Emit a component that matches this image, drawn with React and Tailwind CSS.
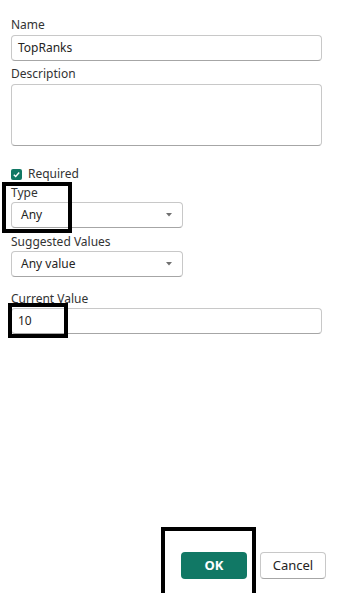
import React from 'react';

const font = { fontFamily: '"Noto Sans", "Open Sans", sans-serif' };

function Label({ children, className = '' }) {
  return (
    <div className={`text-[12px] leading-[16px] text-[#333333] ${className}`}>{children}</div>
  );
}

function Field({ value, className = '' }) {
  return (
    <div
      className={`h-[26px] rounded-[4px] border border-[#c8c8c8] border-b-[#a6a6a6] bg-white px-[6px] flex items-center text-[12px] text-[#252423] ${className}`}
    >
      {value}
    </div>
  );
}

function Select({ value }) {
  return (
    <div className="w-[172px] h-[26px] rounded-[4px] border border-[#c8c8c8] border-b-[#a6a6a6] bg-white pl-[9px] pr-[10px] flex items-center justify-between text-[12px] text-[#252423]">
      <span>{value}</span>
      <svg width="6" height="4" viewBox="0 0 6 4">
        <path d="M0 0H6L3 3.5Z" fill="#707070" />
      </svg>
    </div>
  );
}

function Marker({ className }) {
  return <div className={`absolute border-[4px] border-black pointer-events-none ${className}`} />;
}

export default function App() {
  return (
    <div className="relative w-[355px] h-[593px] bg-white overflow-hidden" style={font}>
      <div className="flex flex-col h-full pl-[11px] pr-[33px] pt-[17px]">
        <Label className="mb-[2px]">Name</Label>
        <Field value="TopRanks" className="w-[311px]" />
        <Label className="mt-[5px] mb-[2px]">Description</Label>
        <div className="w-[311px] h-[62px] rounded-[4px] border border-[#c8c8c8] border-b-[#a6a6a6] bg-white" />

        <div className="mt-[20px] flex items-center gap-[6px]">
          <div className="w-[11px] h-[11px] rounded-[2px] bg-[#117865] flex items-center justify-center">
            <svg width="9" height="9" viewBox="0 0 10 10">
              <path d="M2 5.2L4.1 7.2L8 2.8" fill="none" stroke="white" strokeWidth="1.6" />
            </svg>
          </div>
          <span className="text-[12px] leading-[16px] text-[#333333]">Required</span>
        </div>

        <Label className="mt-[3px] mb-[1px]">Type</Label>
        <Select value="Any" />
        <Label className="mt-[6px] mb-[1px]">Suggested Values</Label>
        <Select value="Any value" />

        <Label className="mt-[14px] mb-[1px]">Current Value</Label>
        <Field value="10" className="w-[311px]" />

        <div className="mt-auto mb-[14px] flex justify-end gap-[13px]">
          <button className="w-[66px] h-[27px] rounded-[4px] bg-[#117865] text-white text-[13px] font-bold">
            OK
          </button>
          <button className="w-[66px] h-[27px] rounded-[4px] border border-[#c8c8c8] border-b-[#a6a6a6] bg-white text-[#252423] text-[13px] -mr-[4px]">
            Cancel
          </button>
        </div>
      </div>

      <Marker className="left-[2px] top-[182px] w-[70px] h-[51px]" />
      <Marker className="left-[8px] top-[303px] w-[60px] h-[35px]" />
      <Marker className="left-[161px] top-[527px] w-[95px] h-[70px]" />
    </div>
  );
}
